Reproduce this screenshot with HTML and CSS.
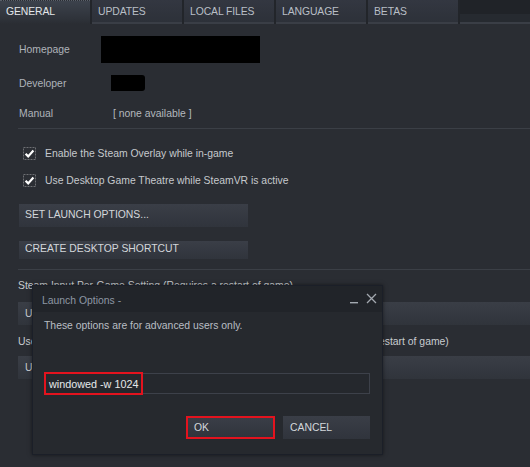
FILE: index.html
```html
<!DOCTYPE html>
<html>
<head>
<meta charset="utf-8">
<link rel="stylesheet" href="styles.css">
</head>
<body>
<div class="tabs">
  <div class="tab active">GENERAL</div>
  <div class="tab">UPDATES</div>
  <div class="tab">LOCAL FILES</div>
  <div class="tab">LANGUAGE</div>
  <div class="tab">BETAS</div>
  <div class="tab-fill"></div>
</div>
<div class="content">
  <div class="row row-home"><span class="label">Homepage</span><span class="redact redact-home"></span></div>
  <div class="row row-dev"><span class="label">Developer</span><span class="redact redact-dev"></span></div>
  <div class="row row-manual"><span class="label">Manual</span><span class="value">[ none available ]</span></div>
  <div class="sep sep-1"></div>
  <div class="check check-1">
    <svg class="box" width="13" height="13" viewBox="0 0 13 13"><rect x="0.5" y="0.5" width="12" height="12" fill="#2b2e34" stroke="#6d6f73" stroke-dasharray="2 1"/><path d="M2.6 6.8 L5.2 9.4 L10.4 3.6" fill="none" stroke="#ffffff" stroke-width="2.2"/></svg>
    <span>Enable the Steam Overlay while in-game</span>
  </div>
  <div class="check check-2">
    <svg class="box" width="13" height="13" viewBox="0 0 13 13"><rect x="0.5" y="0.5" width="12" height="12" fill="#2b2e34" stroke="#6d6f73" stroke-dasharray="2 1"/><path d="M2.6 6.8 L5.2 9.4 L10.4 3.6" fill="none" stroke="#ffffff" stroke-width="2.2"/></svg>
    <span>Use Desktop Game Theatre while SteamVR is active</span>
  </div>
  <div class="btn btn-launch">SET LAUNCH OPTIONS...</div>
  <div class="btn btn-shortcut">CREATE DESKTOP SHORTCUT</div>
  <div class="sep sep-2"></div>
  <div class="line line-1">Steam Input Per-Game Setting (Requires a restart of game)</div>
  <div class="drop drop-1">Use default settings</div>
  <div class="line line-2">Use Steam Input for this game when SteamVR is active on this PC (Requires restart of game)</div>
  <div class="drop drop-2">Use default settings</div>
</div>

<div class="dialog">
  <div class="dlg-title">
    <span class="dlg-name">Launch Options -</span>
    <span class="dlg-controls">
      <svg width="9" height="10" viewBox="0 0 9 10"><rect x="0" y="8" width="8" height="1.4" fill="#a3a9b0"/></svg>
      <svg width="11" height="11" viewBox="0 0 11 11"><path d="M1 1 L10 10 M10 1 L1 10" stroke="#a3a9b0" stroke-width="1.3"/></svg>
    </span>
  </div>
  <div class="dlg-body">
    <div class="dlg-text">These options are for advanced users only.</div>
    <div class="dlg-input">
      <span class="input-text">windowed -w 1024</span>
      <span class="hl hl-input"></span>
    </div>
    <div class="dlg-buttons">
      <div class="dbtn dbtn-ok">OK</div>
      <div class="dbtn dbtn-cancel">CANCEL</div>
    </div>
  </div>
</div>
</body>
</html>
```
FILE: styles.css
```css
html, body {
  margin: 0;
  padding: 0;
}
body {
  width: 530px;
  height: 467px;
  overflow: hidden;
  background: #2a2d33;
  font-family: "Liberation Sans", Arial, sans-serif;
  font-size: 10.4px;
  color: #c3c7cc;
  position: relative;
}

/* tabs */
.tabs {
  display: flex;
  height: 24px;
  background: #22252a;
}
.tab {
  width: 90px;
  margin-right: 2px;
  box-sizing: border-box;
  padding: 6px 0 0 6px;
  background: linear-gradient(#333741, #2d3139);
  border-bottom: 2px solid #3a3e46;
  height: 24px;
  color: #b9bfc6;
  letter-spacing: -0.1px;
}
.tab.active {
  background: linear-gradient(#3c424c, #2e3239 80%, #2a2d33);
  border-top: 1px dotted #5a606a;
  border-bottom: none;
  padding-top: 5px;
  color: #e4e7ea;
}
.tab-fill {
  flex: 1;
  border-bottom: 2px solid #3a3e46;
  background: linear-gradient(#202328 65%, #262a30 65%);
}

/* content */
.content {
  padding-left: 19px;
  display: flex;
  flex-direction: column;
}
.row {
  display: flex;
  align-items: center;
}
.label {
  width: 82px;
  flex: none;
  color: #aeb3ba;
}
.redact {
  background: #000;
  display: block;
}
.row-home { margin-top: 12px; height: 27px; }
.redact-home { width: 159px; height: 27px; }
.row-dev { margin-top: 12px; height: 16px; }
.redact-dev { width: 34px; height: 16px; margin-left: 10px; border-radius: 0 3px 3px 0; }
.row-manual { margin-top: 15px; height: 14px; }
.value { margin-left: 12px; color: #b3b8be; }

.sep {
  height: 1px;
  background: #3b3f46;
  margin-left: -1px;
}
.sep-1 { margin-top: 8px; }
.sep-2 { margin-top: 10px; }

.check {
  display: flex;
  align-items: center;
  height: 13px;
  margin-left: 4px;
  color: #c5c9cd;
}
.check .box { margin-right: 9px; flex: none; }
.check-1 { margin-top: 18px; }
.check-2 { margin-top: 14px; }

.btn {
  width: 229px;
  box-sizing: border-box;
  padding-left: 6px;
  background: linear-gradient(#3a3e47, #30343c);
  color: #d3d7db;
  display: flex;
  align-items: center;
}
.btn-launch { margin-top: 17px; height: 23px; padding-bottom: 2px; }
.btn-shortcut { margin-top: 14px; height: 18px; padding-bottom: 3px; }

.line {
  height: 12px;
  line-height: 12px;
  margin-left: -1px;
  color: #c8ccd0;
  white-space: nowrap;
}
.line-1 { margin-top: 10px; }
.line-2 { margin-top: 11px; }

.drop {
  height: 23px;
  margin-left: -1px;
  padding-left: 7px;
  background: linear-gradient(#3a3e46, #343840 60%, #30343b);
  color: #c8ccd0;
  display: flex;
  align-items: center;
}
.drop-1 { margin-top: 10px; }
.drop-2 { margin-top: 8px; }

/* dialog */
.dialog {
  position: absolute;
  left: 32px;
  top: 285px;
  width: 351px;
  height: 170px;
  box-sizing: border-box;
  background: #26292e;
  border: 1px solid #1b1f28;
  box-shadow: 0 0 4px rgba(0,0,0,0.5);
  display: flex;
  flex-direction: column;
}
.dlg-title {
  height: 26px;
  flex: none;
  background: #212429;
  display: flex;
  align-items: center;
  justify-content: space-between;
  padding: 0 5px 0 9px;
}
.dlg-name {
  color: #8d97a4;
  margin-top: 3px;
}
.dlg-controls {
  display: flex;
  align-items: center;
  gap: 7px;
  margin-top: -1px;
}
.dlg-body {
  padding: 8px 12px 0 11px;
  display: flex;
  flex-direction: column;
}
.dlg-text {
  color: #b9bec4;
  height: 12px;
  line-height: 12px;
}
.dlg-input {
  position: relative;
  margin-top: 41px;
  height: 21px;
  width: 326px;
  box-sizing: border-box;
  border: 1px solid #3d414a;
  border-left-color: #2f333a;
  background: #25282d;
  display: flex;
  align-items: center;
  padding-left: 4px;
}
.input-text {
  color: #e6e8eb;
  font-size: 10.8px;
}
.hl {
  position: absolute;
  border: 2px solid #e3131e;
}
.hl-input {
  left: -1px;
  top: -2px;
  width: 95px;
  height: 19px;
}
.dlg-buttons {
  display: flex;
  justify-content: flex-end;
  gap: 8px;
  margin-top: 22px;
}
.dbtn {
  height: 23px;
  box-sizing: border-box;
  background: linear-gradient(#3a3e47, #30343c);
  color: #d3d7db;
  display: flex;
  align-items: center;
  padding-left: 7px;
}
.dbtn-ok {
  width: 89px;
  border: 2px solid #e3131e;
  padding-left: 6px;
}
.dbtn-cancel {
  width: 87px;
}
```
